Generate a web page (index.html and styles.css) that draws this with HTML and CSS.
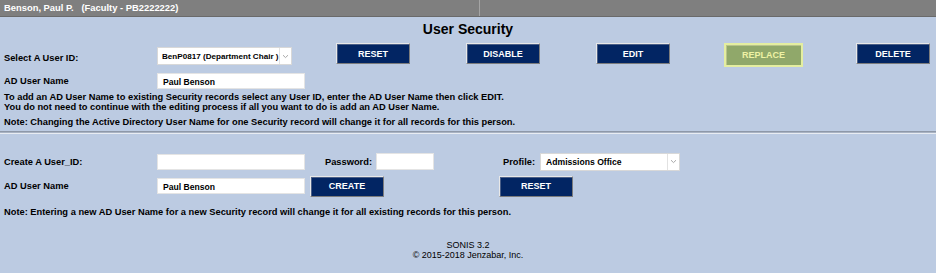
FILE: index.html
```html
<!DOCTYPE html>
<html>
<head>
    <title>User Security</title>
    <link rel="stylesheet" href="styles.css">
</head>
<body>
    <div class="topbar">
        <div class="topbar-cell who">Benson, Paul P. &nbsp;&nbsp;(Faculty - PB2222222)</div>
        <div class="topbar-cell"></div>
    </div>

    <h1 class="heading">User Security</h1>

    <div class="edit-area">
        <div class="row row-select">
            <div class="label">Select A User ID:</div>
            <div class="field-col">
                <div class="fake-select user-select">
                    <span class="sel-text">BenP0817 (Department Chair )</span>
                    <span class="sel-arrow"><svg width="7" height="5" viewBox="0 0 7 5"><path d="M1 1.2 L3.5 3.6 L6 1.2" fill="none" stroke="#a8a8a8" stroke-width="1"/></svg></span>
                </div>
            </div>
            <div class="btn-row">
                <button class="btn">RESET</button>
                <button class="btn">DISABLE</button>
                <button class="btn">EDIT</button>
                <button class="btn btn-replace">REPLACE</button>
                <button class="btn">DELETE</button>
            </div>
        </div>

        <div class="row row-ad">
            <div class="label">AD User Name</div>
            <div class="field-col">
                <div class="textbox wide">Paul Benson</div>
            </div>
        </div>

        <p class="info info-first">To add an AD User Name to existing Security records select any User ID, enter the AD User Name then click EDIT.</p>
        <p class="info">You do not need to continue with the editing process if all you want to do is add an AD User Name.</p>
        <p class="info info-note">Note: Changing the Active Directory User Name for one Security record will change it for all records for this person.</p>
    </div>

    <div class="divider"></div>

    <div class="create-area">
        <div class="row row-create">
            <div class="label">Create A User_ID:</div>
            <div class="field-col">
                <div class="textbox wide"></div>
            </div>
            <div class="label pw-label">Password:</div>
            <div class="textbox pw"></div>
            <div class="label profile-label">Profile:</div>
            <div class="fake-select profile-select">
                <span class="sel-text">Admissions Office</span>
                <span class="sel-arrow"><svg width="7" height="5" viewBox="0 0 7 5"><path d="M1 1.2 L3.5 3.6 L6 1.2" fill="none" stroke="#a8a8a8" stroke-width="1"/></svg></span>
            </div>
        </div>
        <div class="row row-ad2">
            <div class="label">AD User Name</div>
            <div class="field-col">
                <div class="textbox wide">Paul Benson</div>
            </div>
            <button class="btn btn-create">CREATE</button>
            <button class="btn btn-reset2">RESET</button>
        </div>
        <p class="info info-note2">Note: Entering a new AD User Name for a new Security record will change it for all existing records for this person.</p>
    </div>

    <div class="footer">
        <div>SONIS 3.2</div>
        <div>&copy; 2015-2018 Jenzabar, Inc.</div>
    </div>
</body>
</html>
```

FILE: styles.css
```css
body{
    margin: 0;
    background-color: #bccbe2;
    color: #000;
    font-family: "Liberation Sans", Arial, sans-serif;
    font-size: 9.3px;
    font-weight: bold;
}

.topbar{
    display: flex;
    height: 17px;
    background-color: #7f7f7f;
    border-bottom: 1px solid #6a6a6a;
    box-sizing: border-box;
}

.topbar-cell{
    flex: 1;
    color: white;
    font-size: 9.4px;
    line-height: 16px;
    padding-left: 4px;
}

.topbar-cell.who{
    flex: 0 0 475px;
    border-right: 1px solid #a4a4a4;
}

.heading{
    margin: 4px 0 0 0;
    text-align: center;
    font-size: 14px;
    line-height: 17px;
}

.edit-area, .create-area{
    padding: 0 4px;
}

.row{
    display: flex;
    align-items: center;
}

.label{
    flex: 0 0 153px;
}

.field-col{
    flex: 0 0 179px;
}

.row-select{
    margin-top: 5px;
    height: 24px;
    align-items: flex-start;
}

.row-select .label{
    padding-top: 10px;
}

.row-select .field-col{
    padding-top: 4px;
}

.btn-row{
    display: flex;
    gap: 56px;
}

.btn{
    width: 74px;
    height: 21px;
    padding: 0;
    background-color: #022563;
    color: white;
    font-family: "Liberation Sans", Arial, sans-serif;
    font-size: 9px;
    font-weight: bold;
    border: 1px solid;
    border-color: #e8e8e8 #7c7c7c #7c7c7c #e8e8e8;
    box-shadow: inset 1px 1px 0 #4a5f88;
    cursor: pointer;
}

.btn-replace{
    width: 79px;
    height: 24px;
    margin-left: -2px;
    margin-right: -3px;
    background-color: #90a86a;
    color: #eef2a4;
    border: 2px solid #e4eea0;
    box-shadow: inset 1px 1px 0 #b8c48a;
}

.fake-select{
    display: flex;
    align-items: center;
    height: 18px;
    background-color: white;
    border: 1px solid #d8d8d8;
    box-sizing: border-box;
    font-size: 8.6px;
}

.sel-text{
    flex: 1;
    padding-left: 5px;
    white-space: nowrap;
    overflow: hidden;
}

.user-select .sel-text{
    padding-left: 4px;
    font-size: 8.1px;
    overflow: visible;
}

.sel-arrow{
    width: 11px;
    height: 16px;
    display: flex;
    align-items: center;
    justify-content: center;
    border-left: 1px solid #e2e2e2;
    background-color: white;
}

.user-select{
    width: 135px;
}

.textbox{
    height: 16px;
    line-height: 16px;
    background-color: white;
    border: 1px solid #e4e4e4;
    padding-left: 5px;
    box-sizing: border-box;
    font-size: 8.6px;
}

.wide{
    width: 148px;
}

.row-ad{
    margin-top: 5px;
    height: 17px;
}

.info{
    margin: 0;
    line-height: 9.5px;
}

.info-first{
    margin-top: 4px;
}

.info-note{
    margin-top: 6px;
}

.divider{
    margin-top: 3px;
    height: 1px;
    border-top: 1px solid #8e98a8;
    border-bottom: 1px solid #e8ecf2;
    background-color: #a9b3c3;
}

.create-area{
    padding-top: 19px;
}

.row-create{
    height: 18px;
}

.pw-label{
    flex: 0 0 auto;
    margin-left: -11px;
    margin-right: 4px;
}

.pw{
    width: 58px;
    height: 17px;
}

.profile-label{
    flex: 0 0 auto;
    margin-left: 69px;
    margin-right: 5px;
}

.profile-select{
    width: 140px;
}

.row-ad2{
    margin-top: 5px;
    height: 21px;
}

.btn-create{
    margin-left: -26px;
}

.btn-reset2{
    margin-left: 115px;
}

.info-note2{
    margin-top: 11px;
}

.footer{
    margin-top: 23px;
    text-align: center;
    font-family: "Liberation Sans Narrow", "Liberation Sans", Arial, sans-serif;
    font-weight: normal;
    font-size: 9px;
    line-height: 10px;
}
```
